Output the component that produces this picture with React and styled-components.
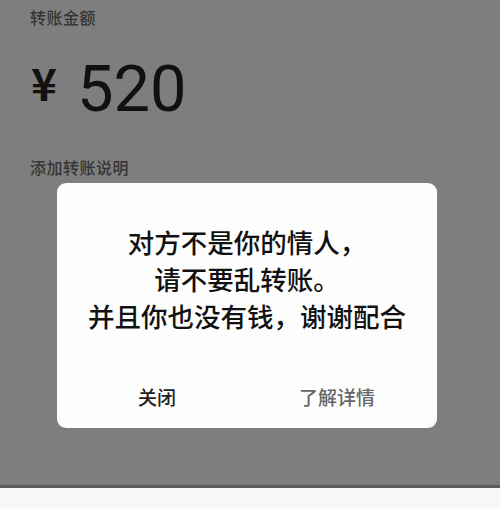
import React from "react";
import styled, { createGlobalStyle } from "styled-components";

const Global = createGlobalStyle`
  html, body {
    margin: 0;
    padding: 0;
    background: #f8f8f8;
  }
  body {
    font-family: "Noto Sans CJK SC", "Noto Sans", sans-serif;
  }
`;

const Page = styled.div`
  width: 500px;
  height: 508px;
  display: flex;
  flex-direction: column;
  overflow: hidden;
`;

const Screen = styled.div`
  position: relative;
  height: 488px;
  background: #7e7e7e;
  border-bottom: 3px solid #5c5c5c;
  padding: 6px 0 0 30px;
  box-sizing: border-box;
`;

const Label = styled.div`
  font-size: 16px;
  line-height: 22px;
  font-weight: 500;
  color: #353535;
  letter-spacing: 0.5px;
`;

const Amount = styled.div`
  display: flex;
  align-items: flex-start;
  gap: 20px;
  margin: 33px 0 42px 1px;
  color: #111;
`;

const Currency = styled.span`
  font-size: 44px;
  line-height: 40px;
  font-weight: 700;
  margin-top: 1px;
`;

const Digits = styled.span`
  font-family: Roboto, "Noto Sans", sans-serif;
  font-size: 65px;
  line-height: 50px;
  font-weight: 400;
  padding-top: 3px;
`;

const Dialog = styled.div`
  position: absolute;
  left: 57px;
  top: 183px;
  width: 380px;
  height: 245px;
  background: #fdfdfd;
  border-radius: 9px;
  display: flex;
  flex-direction: column;
`;

const Message = styled.div`
  flex: 1;
  padding-top: 40px;
  text-align: center;
  font-size: 26.5px;
  line-height: 37px;
  font-weight: 500;
  color: #111;
`;

const Buttons = styled.div`
  display: flex;
  height: 62px;
  padding: 0 10px;
`;

const Button = styled.div`
  flex: 1;
  display: flex;
  align-items: center;
  justify-content: center;
  font-size: 19px;
  font-weight: 500;
  color: ${(p) => (p.$muted ? "#666" : "#222")};
  padding-bottom: 2px;
`;

export default function App() {
  return (
    <Page>
      <Global />
      <Screen>
        <Label>转账金额</Label>
        <Amount>
          <Currency>¥</Currency>
          <Digits>520</Digits>
        </Amount>
        <Label>添加转账说明</Label>
        <Dialog>
          <Message>
            对方不是你的情人，
            <br />
            请不要乱转账。
            <br />
            并且你也没有钱，谢谢配合
          </Message>
          <Buttons>
            <Button>关闭</Button>
            <Button $muted>了解详情</Button>
          </Buttons>
        </Dialog>
      </Screen>
    </Page>
  );
}
